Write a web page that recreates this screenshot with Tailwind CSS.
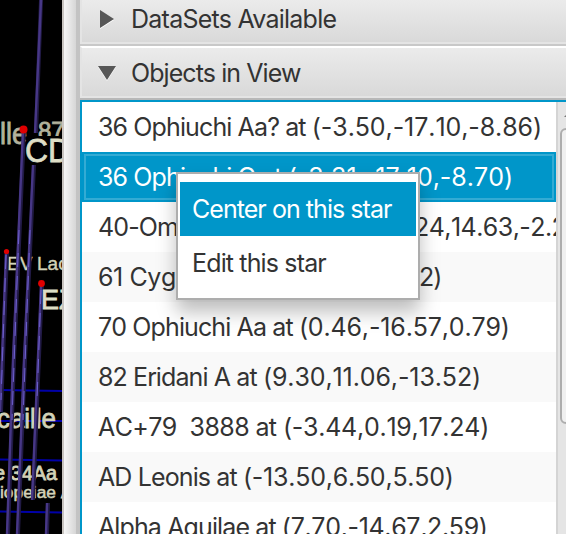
<!DOCTYPE html>
<html lang="en">
<head>
<meta charset="utf-8">
<title>Objects in View</title>
<script src="https://cdn.jsdelivr.net/npm/@tailwindcss/browser@4"></script>
</head>
<body class="w-[566px] h-[534px] overflow-hidden bg-black font-['Inter','Liberation_Sans',sans-serif] text-[25px] leading-[50px] text-[#333]">
<div class="relative flex w-[566px] h-[534px] overflow-hidden">
  <!-- Star field -->
  <svg class="w-[62px] h-[534px] shrink-0 bg-black" viewBox="0 0 62 534" font-family="Liberation Sans, Arial, sans-serif">
    <g stroke="#0000a8" stroke-width="2">
      <path d="M0 390l62 1M0 421h62M0 459.500l62 1M0 511.500l62 1"/>
    </g>
    <g fill="#d2d2b8" stroke="#d2d2b8" stroke-width=".8">
      <text x="0" y="144" font-size="30" textLength="27" lengthAdjust="spacingAndGlyphs" opacity=".85">lle</text>
      <text x="38" y="139" font-size="24" opacity=".85">87</text>
      <text x="7" y="270" font-size="19" stroke-width=".4">EV</text>
      <text x="37" y="270" font-size="19" stroke-width=".4">Lac</text>
      <text x="-3" y="428" font-size="27" textLength="59" lengthAdjust="spacingAndGlyphs">caille</text>
      <text x="-6" y="480" font-size="20" textLength="63" lengthAdjust="spacingAndGlyphs">e 34Aa</text>
      <text x="0" y="498" font-size="16" textLength="56" lengthAdjust="spacingAndGlyphs" stroke-width=".5">iopeiae</text>
      <text x="61" y="498" font-size="16">A</text>
    </g>
    <g stroke="#211a45" stroke-width="4" fill="none">
      <path d="M41 0L36 133M34 165L25 360L18 534M24 130L14 360L8 534M7 252L1 412M42 285L33 500M48 503L47 534"/>
    </g>
    <g stroke="#473786" stroke-width="2.400" fill="none">
      <path d="M41 0L35 133M33 165L24 360L17 534M23 130L13 360L7 534M6 252L0 412M41 285L32 500M47 503L46 534"/>
    </g>
    <g stroke="#6d60cf" stroke-width="1" stroke-dasharray="14 9" fill="none">
      <path d="M30 230L23 420M19 230L12 420M6 255L1 400M41 290L37 400"/>
    </g>
    <path d="M28 136h34v28h-34z" fill="#000"/>
    <g fill="#dedec6" stroke="#dedec6" stroke-width=".8">
      <text x="25" y="162" font-size="34" textLength="46" lengthAdjust="spacingAndGlyphs">CD</text>
      <text x="41" y="309" font-size="27">EZ</text>
    </g>
    <g fill="#e00000"><circle cx="23.500" cy="129.500" r="4"/><circle cx="6.500" cy="251.500" r="2.600"/><circle cx="41.500" cy="283.500" r="3.400"/></g>
  </svg>

  <!-- Split divider -->
  <div class="w-[18px] shrink-0 border-l-2 border-r-4 border-l-[#c8c4c0] border-r-[#c3c3c3] bg-linear-to-r from-[#f6f6f6] to-[#d6d6d6]"></div>

  <!-- Accordion -->
  <div class="flex flex-col w-[486px] shrink-0">
    <div class="h-[44px] shrink-0 flex items-start border-l-2 border-b-2 border-[#e4e4e4] bg-linear-to-b from-[#ebebeb] to-[#d9d9d9]">
      <svg class="w-[49px] h-[42px] shrink-0" viewBox="0 0 49 42"><path d="M18 11l14 9-14 9z" fill="#fff"/><path d="M18 10l14 9-14 9z" fill="#575757"/></svg>
      <span class="leading-[38px] tracking-[-0.75px]">DataSets Available</span>
    </div>
    <div class="h-[2px] shrink-0 bg-[#c8c8c8]"></div>
    <div class="h-[52px] shrink-0 flex items-start border-t-2 border-l-2 border-b-2 border-[#e4e4e4] border-t-white bg-linear-to-b from-[#ebebeb] to-[#d9d9d9]">
      <svg class="w-[49px] h-[48px] shrink-0" viewBox="0 0 49 48"><path d="M16 19h18l-9 14z" fill="#fff"/><path d="M16 18h18l-9 14z" fill="#575757"/></svg>
      <span class="leading-[50px] tracking-[-0.92px]">Objects in View</span>
    </div>
    <div class="h-[2px] shrink-0 bg-[#b8b8b8]"></div>

    <div class="flex h-[434px] shrink-0 border-t-2 border-l-2 border-[#0096c9] bg-white">
      <div class="w-[474px] shrink-0 overflow-hidden tracking-[-0.88px] [font-kerning:none] whitespace-nowrap">
        <div class="h-[50px] pl-[16px] bg-white">36 Ophiuchi Aa? at <span class="tracking-[-0.08px]">(-3.50,-17.10,-8.86)</span></div>
        <div class="h-[50px] p-[2px] bg-[#0096c9] text-white"><div class="h-[46px] pl-[12px] leading-[42px] border-2 border-[#33abd4]">36 Ophiuchi C at <span class="tracking-[-0.01px]">(-3.31,-17.10,-8.70)</span></div></div>
        <div class="h-[50px] pl-[16px] bg-white flex"><span class="w-[316px] shrink-0 overflow-hidden">40-Omicron</span><span class="tracking-[-0.55px]">24,14.63,-2.22)</span></div>
        <div class="h-[50px] pl-[16px] bg-[#f9f9f9] flex"><span class="w-[321px] shrink-0 overflow-hidden tracking-[-0.4px]">61 Cygni A at</span><span>2)</span></div>
        <div class="h-[50px] pl-[16px] bg-white">70 Ophiuchi Aa at <span class="tracking-[-0.15px]">(0.46,-16.57,0.79)</span></div>
        <div class="h-[50px] pl-[16px] bg-[#f9f9f9]">82 Eridani A at <span class="tracking-[-0.1px]">(9.30,11.06,-13.52)</span></div>
        <div class="h-[50px] pl-[16px] bg-white whitespace-pre tracking-[-0.6px]">AC+79  3888 at <span class="tracking-[-0.25px]">(-3.44,0.19,17.24)</span></div>
        <div class="h-[50px] pl-[16px] bg-[#f9f9f9]">AD Leonis at <span class="tracking-[-0.23px]">(-13.50,6.50,5.50)</span></div>
        <div class="h-[32px] pl-[16px] bg-white">Alpha Aquilae at <span class="tracking-[-0.33px]">(7.70,-14.67,2.59)</span></div>
      </div>
      <div class="w-[10px] shrink-0 overflow-hidden border-l-2 border-[#d4d4d4] bg-[#e5e5e5] flex flex-col">
        <svg class="w-[8px] h-[15px] shrink-0" viewBox="0 0 8 15"><path d="M6 15l6-6v6z" fill="#777"/></svg>
        <div class="mt-[11px] ml-[2px] w-[20px] h-[296px] shrink-0 rounded-[6px] border-2 border-[#adadad] bg-[#f0f0f0]"></div>
      </div>
    </div>
  </div>

  <!-- Context menu -->
  <div class="absolute left-[176px] top-[172px] w-[244px] h-[128px] border-2 border-[#adadad] bg-white pt-[8px] px-[2px] shadow-[0_12px_18px_rgba(0,0,0,0.26)]">
    <div class="h-[54px] pl-[12px] leading-[54px] tracking-[-0.95px] bg-[#0096c9] text-white">Center on this star</div>
    <div class="h-[54px] pl-[12px] leading-[54px] tracking-[-0.85px]">Edit this star</div>
  </div>
</div>
</body>
</html>
